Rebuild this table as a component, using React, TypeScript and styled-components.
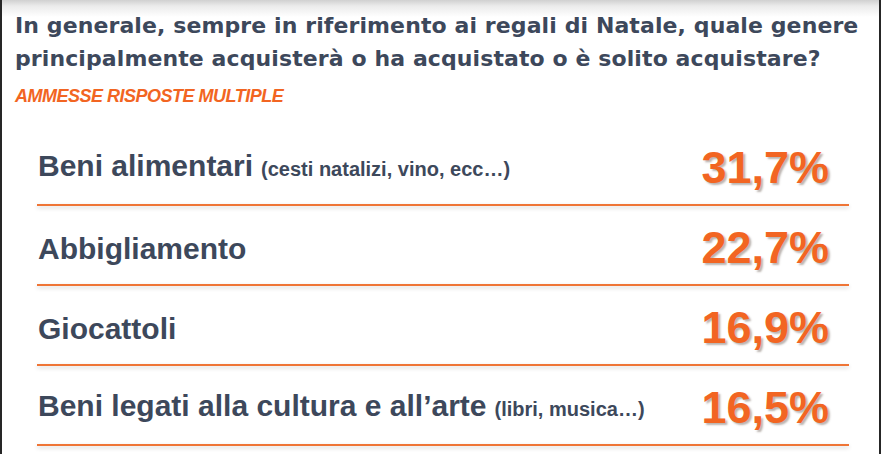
import React from "react";
import styled, { createGlobalStyle } from "styled-components";

const GlobalStyle = createGlobalStyle`
  html, body { margin: 0; padding: 0; background: #ffffff; }
  body { font-family: "Liberation Sans", Arial, sans-serif; }
`;

const Slide = styled.div`
  box-sizing: border-box;
  width: 881px;
  height: 454px;
  border-left: 2px solid #262626;
  border-right: 2px solid #262626;
  background: linear-gradient(to bottom, #d0d0d0 0px, #ebebeb 6px, #ffffff 17px);
  overflow: hidden;
`;

const Header = styled.header`
  padding: 9px 0 0 13px;
`;

const Question = styled.h1`
  margin: 0;
  font-family: "DejaVu Sans", sans-serif;
  font-weight: 700;
  font-size: 22px;
  letter-spacing: 0.1px;
  line-height: 33px;
  color: #3d485b;
`;

const Note = styled.p`
  margin: 11px 0 0;
  font-family: "Liberation Sans", Arial, sans-serif;
  font-style: italic;
  font-weight: 700;
  font-size: 18px;
  letter-spacing: -0.5px;
  line-height: 20px;
  color: #f26522;
`;

const List = styled.ul`
  list-style: none;
  margin: 20px 0 0 35px;
  padding: 0;
  width: 812px;
`;

const Item = styled.li`
  display: flex;
  flex-direction: column;
  height: 80px;
`;

const ItemBody = styled.div`
  flex: 1;
  display: flex;
  align-items: flex-end;
  justify-content: space-between;
  padding: 0 20px 17px 1px;
`;

const Label = styled.span`
  font-family: "Liberation Sans", Arial, sans-serif;
  font-weight: 700;
  font-size: 30px;
  line-height: 36px;
  color: #3d485b;
  white-space: nowrap;
`;

const Detail = styled.span`
  margin-left: 8px;
  font-size: 20px;
  font-weight: 700;
`;

const Value = styled.span`
  font-family: "Liberation Sans", Arial, sans-serif;
  font-weight: 700;
  font-size: 45px;
  line-height: 38px;
  color: #f26522;
  text-shadow: 2px 2px 2px rgba(60, 40, 30, 0.35);
`;

const Rule = styled.div`
  height: 2px;
  background: #ef7536;
  box-shadow: 0 2px 4px rgba(0, 0, 0, 0.18);
`;

type Entry = { label: string; detail?: string; value: string };

const entries: Entry[] = [
  { label: "Beni alimentari", detail: "(cesti natalizi, vino, ecc…)", value: "31,7%" },
  { label: "Abbigliamento", value: "22,7%" },
  { label: "Giocattoli", value: "16,9%" },
  { label: "Beni legati alla cultura e all’arte", detail: "(libri, musica…)", value: "16,5%" },
];

export default function App() {
  return (
    <>
      <GlobalStyle />
      <Slide>
        <Header>
          <Question>
            In generale, sempre in riferimento ai regali di Natale, quale genere
            <br />
            principalmente acquisterà o ha acquistato o è solito acquistare?
          </Question>
          <Note>AMMESSE RISPOSTE MULTIPLE</Note>
        </Header>
        <List>
          {entries.map((e) => (
            <Item key={e.label}>
              <ItemBody>
                <Label>
                  {e.label}
                  {e.detail && <Detail>{e.detail}</Detail>}
                </Label>
                <Value>{e.value}</Value>
              </ItemBody>
              <Rule />
            </Item>
          ))}
        </List>
      </Slide>
    </>
  );
}
